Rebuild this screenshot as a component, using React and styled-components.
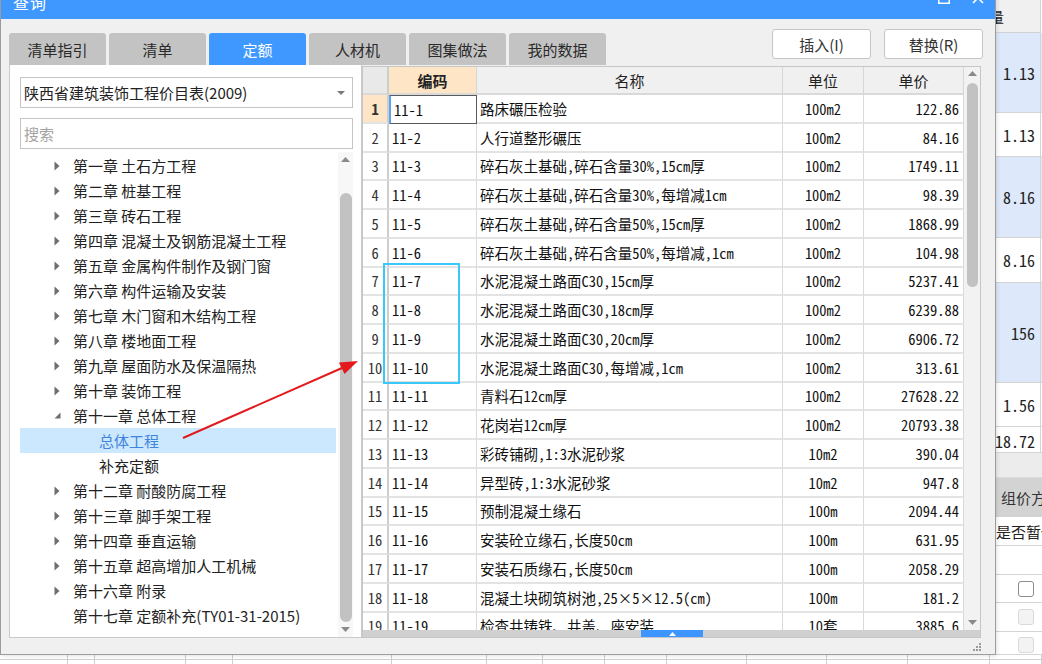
import React from 'react';
import styled, { createGlobalStyle } from 'styled-components';

const UI_FONT = `"Noto Sans CJK SC", "Microsoft YaHei", sans-serif`;
const GRID_FONT = `"Noto Sans Mono CJK SC", "Liberation Mono", "Noto Sans CJK SC", monospace`;

const GlobalStyle = createGlobalStyle`
  html, body { margin: 0; padding: 0; background: #fff; overflow: hidden; }
  * { box-sizing: border-box; }
`;

const Desktop = styled.div`
  position: relative;
  width: 1042px;
  height: 664px;
  overflow: hidden;
  background: #fff;
  font-family: ${UI_FONT};
`;

/* ---------- background application (behind the dialog) ---------- */
const BackApp = styled.div`
  display: flex;
  flex-direction: column;
  width: 100%;
  height: 100%;
`;
const BackTop = styled.div`
  display: flex;
  height: 655px;
`;
const BackFill = styled.div`
  flex: 1;
  background: #f0f0f0;
`;
const BackColumn = styled.div`
  width: 97px;
  display: flex;
  flex-direction: column;
  background: #fff;
`;
const BackHeader = styled.div`
  height: 33px;
  display: flex;
  align-items: center;
  padding-left: 14px;
  background: #f0f0f0;
  border-bottom: 1px solid #d2d2d2;
  border-right: 1px solid #d2d2d2;
  width: 96px;
  font-size: 15px;
  color: #222;
`;
const BackRow = styled.div`
  height: ${p => p.$h}px;
  display: grid;
  grid-template-columns: 96px 1fr;
  border-bottom: 1px solid #d4d4d4;
`;
const BackCell = styled.div`
  background: ${p => (p.$hl ? '#dde8fb' : '#fff')};
  border-right: 1px solid #d4d4d4;
  display: flex;
  justify-content: flex-end;
  align-items: ${p => (p.$bottom ? 'flex-end' : 'center')};
  padding-right: 5px;
  font-family: ${GRID_FONT};
  font-size: 16px;
  color: #222;
  line-height: 1;
  white-space: nowrap;
  padding-bottom: ${p => (p.$bottom ? '3px' : '0')};
`;
const BackCellRest = styled.div`
  background: ${p => (p.$hl ? '#dde8fb' : '#fff')};
`;
const BackGap = styled.div`
  height: 25px;
  background: #ececec;
  border-bottom: 1px solid #dcdcdc;
`;
const BackTabStrip = styled.div`
  height: 39px;
  display: flex;
  align-items: stretch;
  background: #ececec;
`;
const BackTab = styled.div`
  margin-left: 40px;
  flex: 1;
  display: flex;
  align-items: center;
  padding-left: 16px;
  background: #d3d3d3;
  font-size: 15px;
  color: #333;
  white-space: nowrap;
`;
const BackGridRow = styled.div`
  height: ${p => p.$h}px;
  display: flex;
  align-items: ${p => (p.$top ? 'flex-start' : 'center')};
  padding-top: ${p => (p.$top ? '5px' : '0')};
  padding-left: ${p => p.$pl || 0}px;
  background: #fff;
  border-bottom: 1px solid #d4d4d4;
  font-size: 15px;
  color: #222;
  white-space: nowrap;
`;
const CheckBox = styled.span`
  width: 16px;
  height: 16px;
  border-radius: 3px;
  border: 1px solid ${p => (p.$disabled ? '#dadada' : '#8c8c8c')};
  background: ${p => (p.$disabled ? '#f3f3f3' : '#fff')};
`;
const BottomStrip = styled.div`
  flex: 1;
  display: grid;
  grid-template-columns: 68px 27px 91px 47px 159px 95px 56px 62px 62px 80px 80px 81px 82px 52px;
  grid-template-rows: 5px 1fr;
  background: #fff;
`;
const StripCell = styled.div`
  border-right: 1px solid #cfcfcf;
  border-bottom: ${p => (p.$first ? '1px solid #cfcfcf' : 'none')};
`;

/* ---------- dialog ---------- */
const Dialog = styled.div`
  position: absolute;
  left: 0;
  top: -16px;
  width: 996px;
  height: 671px;
  display: flex;
  flex-direction: column;
  background: #f0f0f0;
  border: 1px solid #9c9c9c;
  border-top: none;
  box-shadow: 1px 1px 4px rgba(0, 0, 0, 0.12);
`;
const TitleBar = styled.div`
  height: 35px;
  flex: none;
  display: flex;
  align-items: center;
  padding-left: 12px;
  background: #3f98ff;
`;
const TitleText = styled.span`
  font-size: 16px;
  color: #fff;
  letter-spacing: 1px;
`;
const TitleIcons = styled.div`
  margin-left: auto;
  align-self: flex-start;
  margin-top: 8px;
  margin-right: 11px;
  display: flex;
  gap: 22px;
`;
const Body = styled.div`
  flex: 1;
  display: flex;
  flex-direction: column;
  padding: 0 12px 0 8px;
`;
const TopBar = styled.div`
  height: 46px;
  flex: none;
  display: flex;
  align-items: flex-end;
  gap: 3px;
`;
const Tab = styled.div`
  width: 97px;
  height: 32px;
  border-radius: 3px 3px 0 0;
  background: ${p => (p.$active ? '#3f98ff' : '#c3c3c3')};
  color: ${p => (p.$active ? '#fff' : '#2a2a2a')};
  font-size: 15px;
  display: flex;
  align-items: center;
  justify-content: center;
`;
const Buttons = styled.div`
  margin-left: auto;
  margin-bottom: 6px;
  display: flex;
  gap: 13px;
`;
const Button = styled.div`
  width: 99px;
  height: 30px;
  border: 1px solid #c6c6c6;
  border-radius: 3px;
  background: #fff;
  display: flex;
  align-items: center;
  justify-content: center;
  font-size: 15px;
  color: #333;
`;
const Main = styled.div`
  height: 573px;
  flex: none;
  display: flex;
`;
const Footer = styled.div`
  flex: 1;
  display: flex;
  justify-content: flex-end;
  align-items: flex-end;
  padding: 0 2px 3px 0;
`;

/* ---------- left panel ---------- */
const LeftPanel = styled.div`
  width: 353px;
  flex: none;
  display: flex;
  flex-direction: column;
  background: #fff;
  border: 1px solid #cacaca;
  border-top: none;
  padding: 12px 8px 0 10px;
`;
const Select = styled.div`
  height: 31px;
  flex: none;
  display: flex;
  align-items: center;
  padding: 0 7px 0 3px;
  border: 1px solid #c4c4c4;
  font-size: 15px;
  color: #222;
`;
const SelectArrow = styled.span`
  margin-left: auto;
  width: 0;
  height: 0;
  border-left: 4px solid transparent;
  border-right: 4px solid transparent;
  border-top: 4px solid #7a7a7a;
`;
const SearchInput = styled.input`
  height: 31px;
  flex: none;
  margin-top: 10px;
  padding: 0 3px;
  border: 1px solid #c4c4c4;
  outline: none;
  font-family: ${UI_FONT};
  font-size: 15px;
  color: #222;
  &::placeholder { color: #a3a3a3; }
`;
const TreeArea = styled.div`
  flex: 1;
  margin-top: 3px;
  display: flex;
  min-height: 0;
`;
const TreeList = styled.div`
  flex: 1;
  padding-top: 1px;
  overflow: hidden;
`;
const TreeRow = styled.div`
  height: 25px;
  display: flex;
  align-items: center;
  padding-left: ${p => (p.$level ? 79 : 34)}px;
  margin-right: 2px;
  background: ${p => (p.$selected ? '#cce8ff' : 'transparent')};
  color: ${p => (p.$selected ? '#3f84dd' : '#222')};
  font-size: 15px;
  white-space: nowrap;
`;
const ArrowSlot = styled.span`
  width: 19px;
  display: flex;
  align-items: center;
`;
const ScrollBar = styled.div`
  width: ${p => p.$w}px;
  flex: none;
  display: flex;
  flex-direction: column;
  background: ${p => p.$bg};
`;
const ScrollBtn = styled.div`
  height: ${p => p.$h}px;
  flex: none;
  display: flex;
  align-items: center;
  justify-content: center;
`;
const ScrollTrack = styled.div`
  flex: 1;
  display: flex;
  flex-direction: column;
  align-items: center;
  padding-top: ${p => p.$pt}px;
`;
const ScrollThumb = styled.div`
  width: ${p => p.$w}px;
  flex: ${p => (p.$h ? 'none' : 1)};
  height: ${p => (p.$h ? `${p.$h}px` : 'auto')};
  border-radius: 6px;
  background: #c2c2c2;
`;

/* ---------- table ---------- */
const TablePanel = styled.div`
  flex: 1;
  margin: 1px 2px 0 0;
  display: flex;
  flex-direction: column;
  background: #fff;
  border: 1px solid #c6c6c6;
`;
const TableMain = styled.div`
  flex: 1;
  display: flex;
  min-height: 0;
`;
const GridWrap = styled.div`
  flex: 1;
  overflow: hidden;
`;
const Grid = styled.div`
  display: grid;
  grid-template-columns: 26px 88px 306px 81px 100px;
  grid-template-rows: 28px;
  grid-auto-rows: 28.75px;
`;
const HeadCell = styled.div`
  display: flex;
  align-items: center;
  justify-content: center;
  background: ${p => (p.$accent ? '#fde5c6' : p.$corner ? '#e9e9e9' : '#f0f0f0')};
  border-right: ${p => (p.$corner ? '2px solid #cdcdcd' : '1px solid #d6d6d6')};
  border-bottom: 2px solid #d9d9d9;
  font-size: 15px;
  font-weight: ${p => (p.$accent ? 700 : 400)};
  color: #222;
`;
const Cell = styled.div`
  display: flex;
  align-items: center;
  justify-content: ${p => (p.$align === 'right' ? 'flex-end' : p.$align === 'center' ? 'center' : 'flex-start')};
  padding: 0 ${p => (p.$align === 'right' ? 4 : 3)}px;
  border-right: 1px solid #dadada;
  border-bottom: 2px solid #e3e3e3;
  font-family: ${GRID_FONT};
  font-size: 14.5px;
  color: #111;
  white-space: nowrap;
  overflow: hidden;
`;
const NumCell = styled(Cell)`
  justify-content: center;
  padding: 0;
  overflow: visible;
  border-right: 2px solid #cdcdcd;
  background: ${p => (p.$active ? '#fde5c6' : '#fff')};
  font-weight: ${p => (p.$active ? 700 : 400)};
  color: #333;
`;
const CodeCell = styled(Cell)`
  ${p => p.$focused && `
    border: 1px solid #5a5a5a;
    border-left: 2px solid #5aa2f2;
  `}
`;
const HScroll = styled.div`
  height: 7px;
  flex: none;
  display: flex;
  background: #d0d0d0;
`;
const HThumb = styled.div`
  margin-left: 278px;
  width: 62px;
  display: flex;
  align-items: center;
  justify-content: center;
  background: #3d96ff;
`;

/* ---------- overlays ---------- */
const Highlight = styled.div`
  position: absolute;
  left: 383px;
  top: 263px;
  width: 77px;
  height: 121px;
  border: 2px solid #3ac8fa;
  pointer-events: none;
`;
const ArrowOverlay = styled.svg`
  position: absolute;
  left: 0;
  top: 0;
  pointer-events: none;
`;

/* ---------- icons ---------- */
const TriRight = () => (
  <svg width="6" height="10" viewBox="0 0 6 10"><path d="M0.5 0.5 L5.5 5 L0.5 9.5 Z" fill="#6e6e6e" /></svg>
);
const TriDown = () => (
  <svg width="7" height="7" viewBox="0 0 7 7"><path d="M6.5 0.5 L6.5 6.5 L0.5 6.5 Z" fill="#6e6e6e" /></svg>
);
const Caret = ({ up, color = '#8a8a8a', w = 9, h = 5 }) => (
  <svg width={w} height={h} viewBox="0 0 9 5">
    <path d={up ? 'M0 5 L4.5 0 L9 5 Z' : 'M0 0 L4.5 5 L9 0 Z'} fill={color} />
  </svg>
);
const MaxIcon = () => (
  <svg width="12" height="12" viewBox="0 0 12 12"><rect x="0.75" y="0.75" width="10.5" height="10.5" fill="none" stroke="#fff" strokeWidth="1.5" /></svg>
);
const CloseIcon = () => (
  <svg width="12" height="12" viewBox="0 0 12 12"><path d="M1 1 L11 11 M11 1 L1 11" stroke="#fff" strokeWidth="1.6" /></svg>
);
const Grip = () => (
  <svg width="8" height="8" viewBox="0 0 8 8" fill="#9a9a9a">
    <rect x="6" y="0" width="2" height="2" />
    <rect x="3" y="3" width="2" height="2" />
    <rect x="6" y="3" width="2" height="2" />
    <rect x="0" y="6" width="2" height="2" />
    <rect x="3" y="6" width="2" height="2" />
    <rect x="6" y="6" width="2" height="2" />
  </svg>
);

/* ---------- data ---------- */
const tabs = ['清单指引', '清单', '定额', '人材机', '图集做法', '我的数据'];

const tree = [
  { t: '第一章 土石方工程', a: 'r' },
  { t: '第二章 桩基工程', a: 'r' },
  { t: '第三章 砖石工程', a: 'r' },
  { t: '第四章 混凝土及钢筋混凝土工程', a: 'r' },
  { t: '第五章 金属构件制作及钢门窗', a: 'r' },
  { t: '第六章 构件运输及安装', a: 'r' },
  { t: '第七章 木门窗和木结构工程', a: 'r' },
  { t: '第八章 楼地面工程', a: 'r' },
  { t: '第九章 屋面防水及保温隔热', a: 'r' },
  { t: '第十章 装饰工程', a: 'r' },
  { t: '第十一章 总体工程', a: 'd' },
  { t: '总体工程', level: 1, selected: true },
  { t: '补充定额', level: 1 },
  { t: '第十二章 耐酸防腐工程', a: 'r' },
  { t: '第十三章 脚手架工程', a: 'r' },
  { t: '第十四章 垂直运输', a: 'r' },
  { t: '第十五章 超高增加人工机械', a: 'r' },
  { t: '第十六章 附录', a: 'r' },
  { t: '第十七章 定额补充(TY01-31-2015)', a: null },
];

const rows = [
  ['11-1', '路床碾压检验', '100m2', '122.86'],
  ['11-2', '人行道整形碾压', '100m2', '84.16'],
  ['11-3', '碎石灰土基础,碎石含量30%,15cm厚', '100m2', '1749.11'],
  ['11-4', '碎石灰土基础,碎石含量30%,每增减1cm', '100m2', '98.39'],
  ['11-5', '碎石灰土基础,碎石含量50%,15cm厚', '100m2', '1868.99'],
  ['11-6', '碎石灰土基础,碎石含量50%,每增减,1cm', '100m2', '104.98'],
  ['11-7', '水泥混凝土路面C30,15cm厚', '100m2', '5237.41'],
  ['11-8', '水泥混凝土路面C30,18cm厚', '100m2', '6239.88'],
  ['11-9', '水泥混凝土路面C30,20cm厚', '100m2', '6906.72'],
  ['11-10', '水泥混凝土路面C30,每增减,1cm', '100m2', '313.61'],
  ['11-11', '青料石12cm厚', '100m2', '27628.22'],
  ['11-12', '花岗岩12cm厚', '100m2', '20793.38'],
  ['11-13', '彩砖铺砌,1:3水泥砂浆', '10m2', '390.04'],
  ['11-14', '异型砖,1:3水泥砂浆', '10m2', '947.8'],
  ['11-15', '预制混凝土缘石', '100m', '2094.44'],
  ['11-16', '安装砼立缘石,长度50cm', '100m', '631.95'],
  ['11-17', '安装石质缘石,长度50cm', '100m', '2058.29'],
  ['11-18', '混凝土块砌筑树池,25×5×12.5(cm)', '100m', '181.2'],
  ['11-19', '检查井铸铁、井盖、座安装', '10套', '3885.6'],
];

const backRows = [
  { h: 80, hl: true, v: '1.13' },
  { h: 44, v: '1.13' },
  { h: 81, hl: true, v: '8.16' },
  { h: 45, v: '8.16' },
  { h: 100, hl: true, v: '156' },
  { h: 44, v: '1.56' },
  { h: 26, v: '18.72', bottom: true },
];

const stripCols = 14;

export default function App() {
  return (
    <Desktop>
      <GlobalStyle />
      <BackApp>
        <BackTop>
          <BackFill />
          <BackColumn>
            <BackHeader>工程量</BackHeader>
            {backRows.map((r, i) => (
              <BackRow key={i} $h={r.h}>
                <BackCell $hl={r.hl} $bottom={r.bottom}>{r.v}</BackCell>
                <BackCellRest $hl={r.hl} />
              </BackRow>
            ))}
            <BackGap />
            <BackTabStrip>
              <BackTab>组价方案</BackTab>
            </BackTabStrip>
            <BackGridRow $h={29} $pl={51}>是否暂估价</BackGridRow>
            <BackGridRow $h={29} />
            <BackGridRow $h={28} $pl={73}><CheckBox /></BackGridRow>
            <BackGridRow $h={29} $pl={73}><CheckBox $disabled /></BackGridRow>
            <BackGridRow $h={23} $pl={73} $top><CheckBox $disabled /></BackGridRow>
          </BackColumn>
        </BackTop>
        <BottomStrip>
          {Array.from({ length: stripCols }).map((_, i) => <StripCell key={`a${i}`} $first />)}
          {Array.from({ length: stripCols }).map((_, i) => <StripCell key={`b${i}`} />)}
        </BottomStrip>
      </BackApp>

      <Dialog>
        <TitleBar>
          <TitleText>查询</TitleText>
          <TitleIcons>
            <MaxIcon />
            <CloseIcon />
          </TitleIcons>
        </TitleBar>
        <Body>
          <TopBar>
            {tabs.map(t => (
              <Tab key={t} $active={t === '定额'}>{t}</Tab>
            ))}
            <Buttons>
              <Button>插入(I)</Button>
              <Button>替换(R)</Button>
            </Buttons>
          </TopBar>
          <Main>
            <LeftPanel>
              <Select>
                陕西省建筑装饰工程价目表(2009)
                <SelectArrow />
              </Select>
              <SearchInput placeholder="搜索" readOnly />
              <TreeArea>
                <TreeList>
                  {tree.map(n => (
                    <TreeRow key={n.t + (n.level || 0)} $level={n.level} $selected={n.selected}>
                      {!n.level && (
                        <ArrowSlot>{n.a === 'r' ? <TriRight /> : n.a === 'd' ? <TriDown /> : null}</ArrowSlot>
                      )}
                      {n.t}
                    </TreeRow>
                  ))}
                </TreeList>
                <ScrollBar $w={15} $bg="#f7f7f7">
                  <ScrollBtn $h={15}><Caret up /></ScrollBtn>
                  <ScrollTrack $pt={26}>
                    <ScrollThumb $w={12} />
                  </ScrollTrack>
                  <ScrollBtn $h={15}><Caret /></ScrollBtn>
                </ScrollBar>
              </TreeArea>
            </LeftPanel>

            <TablePanel>
              <TableMain>
                <GridWrap>
                  <Grid>
                    <HeadCell $corner />
                    <HeadCell $accent>编码</HeadCell>
                    <HeadCell>名称</HeadCell>
                    <HeadCell>单位</HeadCell>
                    <HeadCell>单价</HeadCell>
                    {rows.map((r, i) => (
                      <React.Fragment key={r[0]}>
                        <NumCell $active={i === 0}>{i + 1}</NumCell>
                        <CodeCell $focused={i === 0}>{r[0]}</CodeCell>
                        <Cell>{r[1]}</Cell>
                        <Cell $align="center">{r[2]}</Cell>
                        <Cell $align="right">{r[3]}</Cell>
                      </React.Fragment>
                    ))}
                  </Grid>
                </GridWrap>
                <ScrollBar $w={16} $bg="#f2f2f2">
                  <ScrollBtn $h={13}><Caret up /></ScrollBtn>
                  <ScrollTrack $pt={3}>
                    <ScrollThumb $w={11} $h={204} />
                  </ScrollTrack>
                  <ScrollBtn $h={15}><Caret /></ScrollBtn>
                </ScrollBar>
              </TableMain>
              <HScroll>
                <HThumb><Caret up color="#fff" w={7} h={4} /></HThumb>
              </HScroll>
            </TablePanel>
          </Main>
          <Footer>
            <Grip />
          </Footer>
        </Body>
      </Dialog>

      <Highlight />
      <ArrowOverlay width="1042" height="664" viewBox="0 0 1042 664">
        <line x1="183" y1="438" x2="342" y2="368" stroke="#e3191c" strokeWidth="2" />
        <path d="M358 361 L344.5 374 L339 362.5 Z" fill="#e3191c" />
      </ArrowOverlay>
    </Desktop>
  );
}
